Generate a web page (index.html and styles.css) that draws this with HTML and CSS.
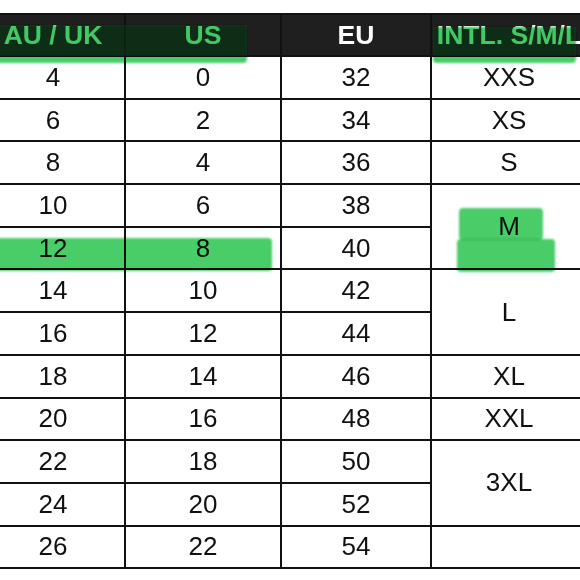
FILE: index.html
```html
<!DOCTYPE html>
<html>
<head>
<meta charset="utf-8">
<link rel="stylesheet" href="styles.css">
</head>
<body>
<div class="chart">
  <table class="sizes">
    <colgroup>
      <col class="c1"><col class="c2"><col class="c3"><col class="c4">
    </colgroup>
    <thead>
      <tr><th>AU / UK</th><th>US</th><th>EU</th><th>INTL. S/M/L</th></tr>
    </thead>
    <tbody>
      <tr><td>4</td><td>0</td><td>32</td><td>XXS</td></tr>
      <tr><td>6</td><td>2</td><td>34</td><td>XS</td></tr>
      <tr><td>8</td><td>4</td><td>36</td><td>S</td></tr>
      <tr><td>10</td><td>6</td><td>38</td><td rowspan="2">M</td></tr>
      <tr><td>12</td><td>8</td><td>40</td></tr>
      <tr><td>14</td><td>10</td><td>42</td><td rowspan="2">L</td></tr>
      <tr><td>16</td><td>12</td><td>44</td></tr>
      <tr><td>18</td><td>14</td><td>46</td><td>XL</td></tr>
      <tr><td>20</td><td>16</td><td>48</td><td>XXL</td></tr>
      <tr><td>22</td><td>18</td><td>50</td><td rowspan="2">3XL</td></tr>
      <tr><td>24</td><td>20</td><td>52</td></tr>
      <tr><td>26</td><td>22</td><td>54</td><td></td></tr>
    </tbody>
  </table>
  <div class="hl hl-head-left"></div>
  <div class="hl hl-head-right"></div>
  <div class="hl hl-row"></div>
  <div class="hl hl-m-top"></div>
  <div class="hl hl-m-bottom"></div>
  <div class="tint tint-left"></div>
  <div class="tint tint-right"></div>
</div>
</body>
</html>
```

FILE: styles.css
```css
html, body {
  margin: 0;
  padding: 0;
  background: #ffffff;
  overflow: hidden;
}

.chart {
  position: relative;
  width: 606px;
  margin-top: 13px;
  margin-left: -20px;
}

.sizes {
  border-collapse: collapse;
  table-layout: fixed;
  width: 606px;
  font-family: "Liberation Sans", Arial, sans-serif;
  font-size: 26px;
  color: #111111;
}

.c1 { width: 144px; }
.c2 { width: 156px; }
.c3 { width: 150px; }
.c4 { width: 156px; }

.sizes th,
.sizes td {
  border: 2px solid #111111;
  padding: 0;
  text-align: center;
  vertical-align: middle;
  white-space: nowrap;
}

.sizes thead tr {
  height: 42px;
}

.sizes tbody tr {
  height: 42.7px;
}

.sizes th {
  background: #1f1f1f;
  color: #ffffff;
  font-weight: bold;
  font-size: 26.5px;
}

.hl {
  position: absolute;
  background: #48cd68;
  mix-blend-mode: multiply;
  border-radius: 4px;
  filter: blur(0.8px);
}

.hl-head-left {
  left: 0;
  top: 12px;
  width: 267px;
  height: 38px;
}

.hl-head-right {
  left: 453px;
  top: 14px;
  width: 143px;
  height: 36px;
}

.hl-row {
  left: 0;
  top: 225px;
  width: 292px;
  height: 33px;
}

.hl-m-top {
  left: 479px;
  top: 195px;
  width: 84px;
  height: 32px;
}

.hl-m-bottom {
  left: 477px;
  top: 226px;
  width: 98px;
  height: 33px;
}

.tint {
  position: absolute;
  background: rgba(50, 170, 85, 0.14);
  filter: blur(0.6px);
}

.tint-left {
  left: 0;
  top: 12px;
  width: 267px;
  height: 31px;
}

.tint-right {
  left: 453px;
  top: 14px;
  width: 143px;
  height: 29px;
}
```
